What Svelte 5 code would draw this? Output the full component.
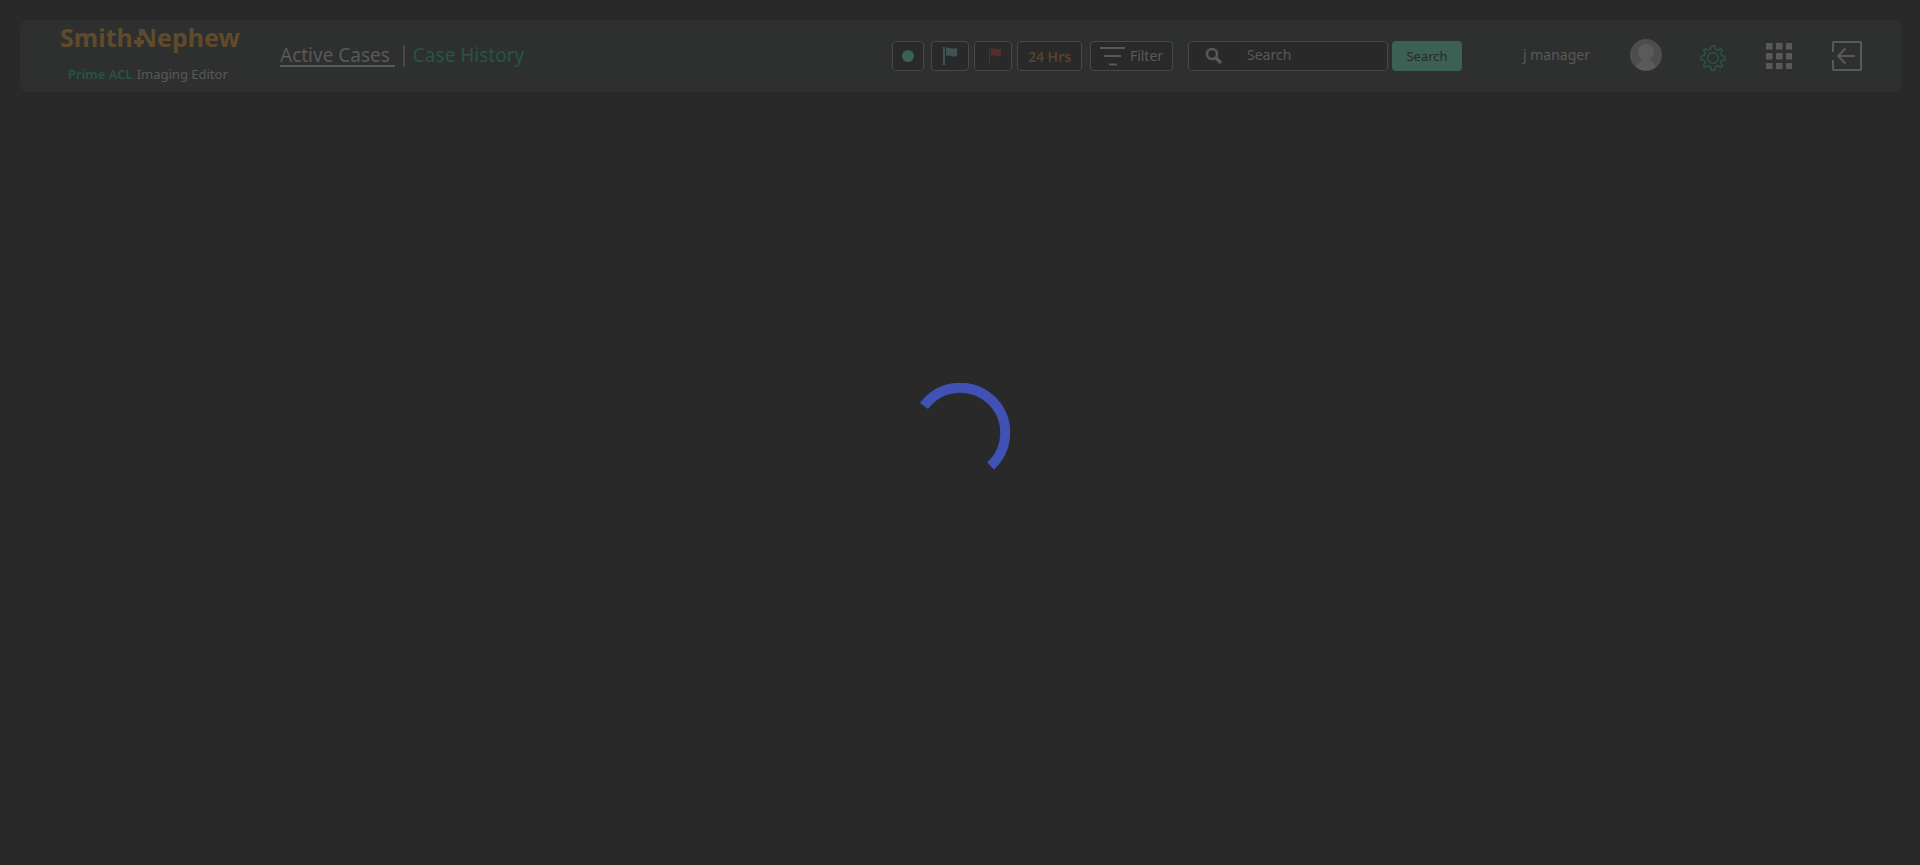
<script>
  let query = $state('');
  const cells = [0, 10, 20];
</script>

<div class="page">
  <header>
    <div class="brand">
      <div class="logo">
        <span>Smith</span>
        <svg class="plus" viewBox="0 0 12 14" aria-hidden="true">
          <path class="patch" d="M3 0H10V14H3Z" />
          <path d="M4 1H8V4H11V8H8V11H4V8H1V4H4Z" />
        </svg>
        <span>Nephew</span>
      </div>
      <div class="product"><b>Prime ACL</b> <span>Imaging Editor</span></div>
    </div>

    <nav>
      <a class="active" href="#active">Active Cases&nbsp;</a>
      <span class="divider"></span>
      <a class="history" href="#history">Case History</a>
    </nav>

    <div class="tools">
      <div class="filters">
        <button class="box dot" aria-label="Active status"><span></span></button>
        <button class="box flag" aria-label="Green flag">
          <svg width="16" height="20" viewBox="0 0 16 20"><path d="M2 1V19" stroke="#405350" stroke-width="2" /><path d="M4 2C7 0 9 4 15 2V10C10 12 8 8 4 10Z" fill="#405350" /></svg>
        </button>
        <button class="box flag red" aria-label="Red flag">
          <svg width="14" height="20" viewBox="0 0 14 20"><path d="M1.500 2V19" stroke="#552f30" stroke-width="1" /><path d="M3 3C7 1 8 4 13 3V10C9 11 8 8 3 10Z" fill="#552f30" /></svg>
        </button>
        <button class="box hours">24 Hrs</button>
      </div>
      <button class="box filter">
        <svg width="26" height="20" viewBox="0 0 26 20"><path d="M0 2H25M4 10H21M9 18.500H17" stroke="#595959" stroke-width="2" /></svg>
        <span>Filter</span>
      </button>
      <form onsubmit={(e) => e.preventDefault()}>
        <label class="box search">
          <svg width="18" height="18" viewBox="0 0 18 18" fill="none" stroke="#595959"><circle cx="7" cy="7" r="5" stroke-width="2.500" /><path d="M10.500 10.500L16 16" stroke-width="3.200" /></svg>
          <input type="text" placeholder="Search" aria-label="Search" bind:value={query} />
        </label>
        <button class="submit">Search</button>
      </form>
    </div>

    <div class="account">
      <span class="user">j manager</span>
      <svg class="avatar" width="32" height="32" viewBox="0 0 32 32">
        <circle cx="16" cy="16" r="16" fill="#4d4d4d" />
        <circle cx="16" cy="13" r="8" fill="#5a5a5a" />
        <path d="M6 28C8 24 11 20 16 20S24 24 26 28A16 16 0 0 1 6 28Z" fill="#5a5a5a" />
      </svg>
      <button class="icon gear" aria-label="Settings">
        <svg width="26" height="26" viewBox="0 0 26 26" fill="none" stroke="#275348" stroke-width="1.500" stroke-linejoin="round">
          <path d="M11.200 1H14.800L15.500 4.300L17.800 5.300L20.600 3.500L22.500 5.400L20.700 8.200L21.700 10.500L25 11.200V14.800L21.700 15.500L20.700 17.800L22.500 20.600L20.600 22.500L17.800 20.700L15.500 21.700L14.800 25H11.200L10.500 21.700L8.200 20.700L5.400 22.500L3.500 20.600L5.300 17.800L4.300 15.500L1 14.800V11.200L4.300 10.500L5.300 8.200L3.500 5.400L5.400 3.500L8.200 5.300L10.500 4.300Z" />
          <circle cx="13" cy="13" r="5.300" />
        </svg>
      </button>
      <button class="icon apps" aria-label="Applications">
        <svg width="26" height="26" viewBox="0 0 26 26" fill="#595959">
          {#each cells as y}
            {#each cells as x}
              <rect {x} {y} width="6.500" height="6.500" />
            {/each}
          {/each}
        </svg>
      </button>
      <button class="icon" aria-label="Log out">
        <svg width="30" height="30" viewBox="0 0 30 30" fill="none" stroke="#595959" stroke-width="2">
          <path d="M1 11V2Q1 1 2 1H28Q29 1 29 2V28Q29 29 28 29H2Q1 29 1 28V19M23 15H6M13.500 7.500L6 15L13.500 22.500" />
        </svg>
      </button>
    </div>
  </header>

  <div class="loading" role="status" aria-label="Loading">
    <svg width="100" height="100" viewBox="0 0 100 100" fill="none">
      <path d="M14 23A45 45 0 1 1 80.500 83" stroke="#4052b6" stroke-width="10" />
    </svg>
  </div>
</div>

<style>
  :global(body) { background: #292929; }
  .page {
    min-height: 100vh;
    box-sizing: border-box;
    padding: 20px 18px 0 20px;
    display: flex;
    flex-direction: column;
    position: relative;
    font-family: "Noto Sans", sans-serif;
    font-size: 14px;
    color: #595959;
  }
  header {
    display: flex;
    align-items: center;
    height: 72px;
    box-sizing: border-box;
    padding: 0 40px;
    background: #2e302f;
    border-radius: 8px;
  }
  button, input { font: inherit; color: inherit; }
  button { padding: 0; cursor: pointer; }
  svg { display: block; flex: none; }
  .brand { width: 220px; }
  .logo {
    display: flex;
    gap: 4px;
    position: relative;
    font: bold 25px/34px "Noto Sans", sans-serif;
    color: #604a2c;
  }
  .plus {
    position: absolute;
    left: 73px;
    top: 16px;
    width: 12px;
    height: 14px;
    fill: #604a2c;
  }
  .plus .patch { fill: #2e302f; }
  .product { display: flex; gap: 4px; padding: 2px 0 0 8px; font-size: 13px; line-height: 36px; }
  .product b { font-weight: 600; color: #275348; }
  nav { display: flex; align-items: center; font-size: 19px; line-height: 20px; }
  nav a { text-decoration: none; border-bottom: 2px solid transparent; }
  nav .active { color: #595959; border-color: #595959; }
  .divider { width: 2px; height: 22px; margin: 0 8px; background: #484848; }
  .history { color: #275348; }
  .tools { display: flex; margin-left: auto; }
  .filters { display: flex; gap: 5px; margin-right: 8px; }
  .box {
    display: flex;
    align-items: center;
    justify-content: center;
    box-sizing: border-box;
    height: 30px;
    border: 1px solid #484848;
    border-radius: 4px;
    background: #292929;
  }
  .dot { width: 32px; margin-right: 2px; }
  .dot span { width: 12px; height: 12px; border-radius: 50%; background: #3a6153; }
  .flag { width: 38px; }
  .flag.red { padding-left: 4px; }
  .hours { width: 65px; color: #574329; font-weight: 600; }
  .filter { width: 83px; gap: 4px; margin-right: 15px; }
  .filter span { padding-bottom: 2px; }
  form { display: flex; gap: 4px; }
  .search { width: 200px; padding: 0 16px; gap: 24px; justify-content: flex-start; }
  .search input { min-width: 0; width: 100%; padding: 0 0 4px; border: 0; outline: 0; background: none; }
  .search input::placeholder { color: #595959; opacity: 1; }
  .submit { width: 70px; border: 0; border-radius: 4px; background: #3a6153; color: #292929; font-size: 13px; }
  .account { display: flex; align-items: center; margin-left: 61px; }
  .user { padding-bottom: 4px; }
  .avatar { margin: 0 38px 2px 40px; }
  .icon { border: 0; background: none; }
  .gear { padding-top: 4px; }
  .apps { margin: 0 40px; }
  .loading {
    position: absolute;
    inset: 0;
    display: flex;
    align-items: center;
    justify-content: center;
    pointer-events: none;
  }
</style>
